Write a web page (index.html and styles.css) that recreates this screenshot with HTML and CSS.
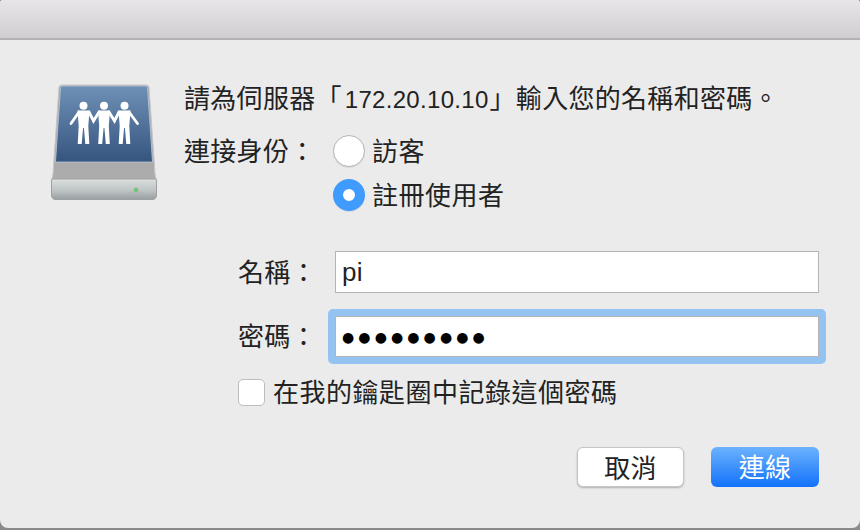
FILE: index.html
```html
<!DOCTYPE html>
<html lang="zh-Hant">
<head>
  <meta charset="UTF-8" />
  <title>連接伺服器</title>
  <link rel="stylesheet" href="styles.css">
</head>
<body>
  <div class="window">
    <div class="titlebar"></div>
    <div class="dialog">
      <div class="top">
        <svg class="drive" width="108" height="118" viewBox="0 0 108 118">
          <defs>
            <linearGradient id="panel" x1="0" y1="0" x2="0" y2="1">
              <stop offset="0" stop-color="#6f90b6" />
              <stop offset="1" stop-color="#35557f" />
            </linearGradient>
            <linearGradient id="front" x1="0" y1="0" x2="0" y2="1">
              <stop offset="0" stop-color="#dfe3e3" />
              <stop offset="0.15" stop-color="#d2d7d7" />
              <stop offset="0.55" stop-color="#bfc4c5" />
              <stop offset="1" stop-color="#989fa1" />
            </linearGradient>
            <linearGradient id="body" x1="0" y1="0" x2="0" y2="1">
              <stop offset="0" stop-color="#a2a2a2" />
              <stop offset="1" stop-color="#adadad" />
            </linearGradient>
            <g id="person">
              <circle cx="0" cy="21.7" r="4" />
              <path d="M-6 26.5 H6 L4.800 42 L5.800 60 H1.800 L0.400 44 H-0.400 L-1.800 60 H-5.800 L-4.800 42 Z" />
            </g>
          </defs>
          <path d="M9 3 Q9.500 1 12 1 H96 Q98.500 1 99 3 L105 90 Q106 94 106 96 H2 Q2 94 3 90 Z" fill="url(#body)" stroke="#c6c6c6" />
          <path d="M10.500 3.500 Q11 2 13 2 H95 Q97 2 97.500 3.500 L102.500 78 H5.500 Z" fill="url(#panel)" stroke="#b9c8d8" stroke-width="0.8" />
          <path d="M1.500 96 Q1.500 95 3 95 H105 Q106.500 95 106.500 96 V111 Q106.500 115.500 102 115.500 H6 Q1.500 115.500 1.500 111 Z" fill="url(#front)" stroke="#a0a0a0" />
          <circle cx="86" cy="106" r="2" fill="#5fd35f" stroke="#8aa88a" stroke-width="0.6" />
          <g fill="#fff">
            <use href="#person" x="33.500" />
            <use href="#person" x="54" />
            <use href="#person" x="74.500" />
          </g>
          <g fill="none" stroke="#fff" stroke-width="2.800" stroke-linecap="round">
            <path d="M29 28 L21 39.500" />
            <path d="M39 28 L43.500 37 L49 28" />
            <path d="M59 28 L64.500 37 L69 28" />
            <path d="M79 28 L87.500 39.500" />
          </g>
        </svg>

        <div class="intro">
          <p class="heading">請為伺服器「<span class="num">172.20.10.10</span>」輸入您的名稱和密碼。</p>
          <div class="connect-as">
            <span class="connect-label">連接身份：</span>
            <div class="radios">
              <div class="radio-row"><span class="radio"></span><span class="lifted">訪客</span></div>
              <div class="radio-row"><span class="radio checked"></span><span class="lifted">註冊使用者</span></div>
            </div>
          </div>
        </div>
      </div>

      <div class="fields">
        <div class="field-row">
          <span class="field-label">名稱：</span>
          <div class="field">pi</div>
        </div>
        <div class="field-row">
          <span class="field-label">密碼：</span>
          <div class="ring">
            <div class="field password">●●●●●●●●●</div>
          </div>
        </div>
        <div class="remember"><span class="checkbox"></span><span class="lifted">在我的鑰匙圈中記錄這個密碼</span></div>
      </div>

      <div class="buttons">
        <button class="btn cancel">取消</button>
        <button class="btn primary">連線</button>
      </div>
    </div>
  </div>
</body>
</html>
```

FILE: styles.css
```css
html, body {
  margin: 0;
  height: 100%;
  overflow: hidden;
}

body {
  background: #8b8b8b;
  font-family: "Liberation Sans", "Noto Sans CJK TC", sans-serif;
  font-size: 26px;
  letter-spacing: 0.3px;
  color: #222;
}

.window {
  height: 528px;
  display: flex;
  flex-direction: column;
  border-radius: 3px 3px 8px 8px;
  overflow: hidden;
  background: #ebebeb;
}

.titlebar {
  height: 38px;
  flex: none;
  background: linear-gradient(#e7e5e7, #d0ced0);
  border-bottom: 2px solid #b3b2b3;
}

.dialog {
  flex: 1;
  display: flex;
  flex-direction: column;
}

.top {
  display: flex;
  padding: 44px 0 0 50px;
}

.drive {
  flex: none;
  display: block;
}

.intro {
  margin-left: 26px;
}

.heading {
  margin: 0;
  line-height: 30px;
  white-space: nowrap;
}

.num {
  font-size: 24px;
  margin: 0 1px 0 3px;
}

.connect-as {
  display: flex;
  margin-top: 22px;
}

.connect-label {
  width: 149px;
  line-height: 30px;
}

.radios {
  display: flex;
  flex-direction: column;
  gap: 14px;
  margin-top: -1px;
}

.radio-row {
  display: flex;
  align-items: center;
  gap: 7px;
  height: 30px;
}

.lifted {
  margin-top: -4px;
  letter-spacing: 0.5px;
}

.radio {
  width: 32px;
  height: 32px;
  box-sizing: border-box;
  border-radius: 50%;
  background: #fff;
  border: 1px solid #b5b5b5;
  box-shadow: 0 1px 1px rgba(0, 0, 0, 0.08);
}

.radio.checked {
  border: 10px solid #3f9bfd;
  background: #fff;
}

.fields {
  margin-top: 41px;
  padding-left: 238px;
}

.field-row {
  display: flex;
  align-items: center;
  margin-bottom: 23px;
}

.field-label {
  width: 97px;
  flex: none;
  margin-top: -4px;
}

.field {
  width: 484px;
  height: 42px;
  box-sizing: border-box;
  background: #fff;
  border: 1px solid #b4b4b4;
  padding-left: 6px;
  line-height: 40px;
}

.ring {
  margin: -7px;
  padding: 7px;
  background: #94c2f1;
  border-radius: 5px;
}

.field.password {
  height: 41px;
  font-family: "DejaVu Sans", sans-serif;
  font-size: 14px;
  letter-spacing: 4.100px;
  line-height: 41px;
  color: #000;
}

.remember {
  display: flex;
  align-items: center;
  gap: 8px;
  margin-top: -3px;
  height: 30px;
}

.checkbox {
  width: 27px;
  height: 27px;
  box-sizing: border-box;
  background: #fff;
  border: 1px solid #bdbdbd;
  border-radius: 5px;
}

.buttons {
  display: flex;
  justify-content: flex-end;
  gap: 27px;
  padding-right: 41px;
  margin-top: 40px;
}

.btn {
  height: 40px;
  box-sizing: border-box;
  border-radius: 6px;
  font: inherit;
  letter-spacing: inherit;
  padding: 0 0 4px;
}

.cancel {
  width: 107px;
  background: #fff;
  color: #222;
  border: 1px solid #c6c6c6;
  box-shadow: 0 1px 2px rgba(0, 0, 0, 0.25);
}

.primary {
  width: 108px;
  color: #fff;
  border: none;
  background: linear-gradient(#6cb2fd, #1272fb);
}
```
